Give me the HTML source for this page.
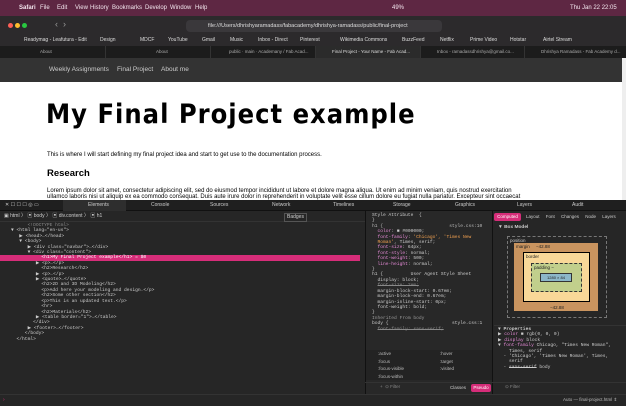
<!DOCTYPE html>
<html><head><style>
*{margin:0;padding:0;box-sizing:border-box}
body{width:626px;height:406px;overflow:hidden;font-family:"Liberation Sans",sans-serif;background:#1e1e1e;position:relative}
.abs{position:absolute}
.menu{left:0;top:0;width:626px;height:16px;background:#5e2743;color:#f3e6ee;font-size:6px;line-height:16px}
.menu span{position:absolute;top:0}
.tool{left:0;top:16px;width:626px;height:30px;background:#2c2a2c}
.url{left:186px;top:20px;width:256px;height:12px;background:#3a383b;border-radius:4px;color:#ddd;font-size:5.5px;line-height:12px;padding-left:22px}
.bm{left:0;top:35px;width:626px;height:11px;color:#ddd;font-size:5px;line-height:11px}
.bm span{position:absolute}
.tabs{left:0;top:46px;width:626px;height:12px;background:#1c1c1c;font-size:4.5px;color:#aaa;line-height:12px}
.tabs div{position:absolute;top:0;height:12px;border-left:1px solid #333;padding-left:40px;width:105px;white-space:nowrap;overflow:hidden}
.nav{left:0;top:58px;width:622px;height:24px;background:#333;color:#ccc;font-size:6.5px;line-height:24px}
.page{left:0;top:82px;width:622px;height:118px;background:#fff;color:#000}
h1{position:absolute;left:46px;top:17px;font-size:27px;font-family:"DejaVu Sans Condensed","Liberation Sans",sans-serif;font-weight:bold;letter-spacing:1px}
.dt{left:0;top:200px;width:626px;height:206px;background:#262626;color:#ccc;font-size:5px}
.dtb{left:0;top:0;width:626px;height:11px;background:#1f1f1f;border-bottom:1px solid #111;line-height:11px}
.dtb span{position:absolute}
.mono{font-family:"Liberation Mono",monospace;font-size:4.6px;line-height:5.4px;white-space:pre}
</style></head><body>
<div class="abs menu">
<span style="left:9px;font-size:8px"></span><span style="left:19px;font-weight:bold">Safari</span><span style="left:40px">File</span><span style="left:57px">Edit</span><span style="left:75px">View</span><span style="left:90px">History</span><span style="left:112px">Bookmarks</span><span style="left:145px">Develop</span><span style="left:170px">Window</span><span style="left:195px">Help</span>
<span style="left:392px">49%</span><span style="left:570px">Thu Jan 22  22:05</span>
</div>
<div class="abs tool">
<div class="abs" style="left:8px;top:7px;width:5px;height:5px;border-radius:50%;background:#fe5f57"></div>
<div class="abs" style="left:15px;top:7px;width:5px;height:5px;border-radius:50%;background:#febc2e"></div>
<div class="abs" style="left:22px;top:7px;width:5px;height:5px;border-radius:50%;background:#28c840"></div>
<div class="abs" style="left:55px;top:3px;color:#999;font-size:9px">‹ &nbsp;›</div>
</div>
<div class="abs url">file:///Users/dhrishyaramadass/fabacademy/dhrishya-ramadass/public/final-project</div>
<div class="abs bm"><span style="left:24px">Readymag - Leafutura - Edit</span><span style="left:100px">Design</span><span style="left:140px">MDCF</span><span style="left:168px">YouTube</span><span style="left:202px">Gmail</span><span style="left:230px">Music</span><span style="left:258px">Inbox - Direct</span><span style="left:300px">Pinterest</span><span style="left:340px">Wikimedia Commons</span><span style="left:402px">BuzzFeed</span><span style="left:440px">Netflix</span><span style="left:470px">Prime Video</span><span style="left:510px">Hotstar</span><span style="left:543px">Airtel Stream</span></div>
<div class="abs tabs">
<div style="left:0;border:none">About</div><div style="left:105px;padding-left:50px">About</div><div style="left:210px;padding-left:18px">public · main · Academany / Fab Acad...</div><div style="left:315px;background:#2b2b2b;color:#ddd;padding-left:16px">Final Project - Your Name - Fab Acad...</div><div style="left:420px;padding-left:16px">Inbox - ramadassdhrishya@gmail.co...</div><div style="left:524px;padding-left:16px">Dhrishya Ramadass - Fab Academy d...</div>
</div>
<div class="abs nav"><span style="position:absolute;left:49px">Weekly Assignments</span><span style="position:absolute;left:117px">Final Project</span><span style="position:absolute;left:161px">About me</span></div>
<div class="abs" style="left:622px;top:58px;width:4px;height:142px;background:#eee"></div>
<div class="abs page">
<h1>My Final Project example</h1>
<div class="abs" style="left:47px;top:70px;font-size:6px">This is where I will start defining my final project idea and start to get use to the documentation process.</div>
<div class="abs" style="left:47px;top:86px;font-size:9.5px;font-weight:bold">Research</div>
<div class="abs" style="left:47px;top:106px;font-size:6px;white-space:nowrap">Lorem ipsum dolor sit amet, consectetur adipiscing elit, sed do eiusmod tempor incididunt ut labore et dolore magna aliqua. Ut enim ad minim veniam, quis nostrud exercitation<br>ullamco laboris nisi ut aliquip ex ea commodo consequat. Duis aute irure dolor in reprehenderit in voluptate velit esse cillum dolore eu fugiat nulla pariatur. Excepteur sint occaecat</div>
</div>
<div class="abs dt">
<div class="abs dtb"><span style="left:5px">✕ ☐ ☐ ☐ ◎ ▭</span><span style="left:63px;width:63px;height:11px;background:#2e2e2e"></span><span style="left:88px">Elements</span><span style="left:151px">Console</span><span style="left:210px">Sources</span><span style="left:272px">Network</span><span style="left:333px">Timelines</span><span style="left:393px">Storage</span><span style="left:455px">Graphics</span><span style="left:517px">Layers</span><span style="left:572px">Audit</span></div>
<div class="abs" style="left:0;top:11px;width:365px;height:11px;line-height:11px;border-bottom:1px solid #333"><span style="position:absolute;left:4px">▣ html 〉 ▣ body 〉 ▣ div.content 〉 ▣ h1</span><span style="position:absolute;left:284px;border:1px solid #555;line-height:7px;top:2px;padding:0 2px">Badges</span></div>
<div class="abs" style="left:0;top:55px;width:360px;height:5.6px;background:#d62d79"></div>
<div class="abs mono" style="left:0;top:23px;width:360px"><span style="color:#888">          &lt;!DOCTYPE html&gt;</span>
    ▼ &lt;html lang="en-us"&gt;
       ▶ &lt;head&gt;…&lt;/head&gt;
       ▼ &lt;body&gt;
          ▶ &lt;div class="navbar"&gt;…&lt;/div&gt;
          ▼ &lt;div class="content"&gt;
<span style="color:#fff">               &lt;h1&gt;My Final Project example&lt;/h1&gt; = $0</span>
             ▶ &lt;p&gt;…&lt;/p&gt;
               &lt;h2&gt;Research&lt;/h2&gt;
             ▶ &lt;p&gt;…&lt;/p&gt;
             ▶ &lt;quote&gt;…&lt;/quote&gt;
               &lt;h2&gt;2D and 3D Modeling&lt;/h2&gt;
               &lt;p&gt;Add here your modeling and design.&lt;/p&gt;
               &lt;h2&gt;Some other section&lt;/h2&gt;
               &lt;p&gt;This is an updated text.&lt;/p&gt;
               &lt;hr&gt;
               &lt;h2&gt;Materials&lt;/h2&gt;
             ▶ &lt;table border="1"&gt;…&lt;/table&gt;
            &lt;/div&gt;
          ▶ &lt;footer&gt;…&lt;/footer&gt;
         &lt;/body&gt;
      &lt;/html&gt;</div>
<div class="abs" style="left:0;top:194px;width:365px;height:1px;background:#333"></div>
<div class="abs" style="left:3px;top:197px;color:#d62d79">›</div>
<div class="abs" style="left:365px;top:11px;width:128px;height:184px;background:#282828;border-left:1px solid #111;border-right:1px solid #111"></div>
<div class="abs mono" style="left:372px;top:13px;color:#ccc">Style Attribute  {
}
<span style="color:#bbb">h1 {                        style.css:10</span>
  <span style="color:#e58ad6">color</span>: ■ #000000;
  <span style="color:#e58ad6">font-family</span>: <span style="color:#f0a050">'Chicago', 'Times New
  Roman'</span>, Times, serif;
  <span style="color:#e58ad6">font-size</span>: 64px;
  <span style="color:#e58ad6">font-style</span>: normal;
  <span style="color:#e58ad6">font-weight</span>: 500;
  <span style="color:#e58ad6">line-height</span>: normal;
}
h1 {          User Agent Style Sheet
  display: block;
  <s style="color:#888">font-size: 2em;</s>
  margin-block-start: 0.67em;
  margin-block-end: 0.67em;
  margin-inline-start: 0px;
  font-weight: bold;
}
<span style="color:#999">Inherited From body</span>
body {                       style.css:1
  <s style="color:#888">font-family: sans-serif;</s></div>
<div class="abs" style="left:366px;top:150px;width:126px;height:30px;background:#232323;font-size:4.5px;line-height:7.5px;color:#bbb;padding-left:12px">:active<br>:focus<br>:focus-visible<br>:focus-within</div>
<div class="abs" style="left:440px;top:150px;font-size:4.5px;line-height:7.5px;color:#bbb">:hover<br>:target<br>:visited</div>
<div class="abs" style="left:471px;top:184px;width:20px;height:8px;background:#d62d79;color:#fff;font-size:4.5px;line-height:8px;text-align:center;border-radius:2px">Pseudo</div>
<div class="abs" style="left:450px;top:184px;font-size:4.5px;line-height:8px">Classes</div>
<div class="abs" style="left:494px;top:13px;width:27px;height:8px;background:#d62d79;color:#fff;font-size:4.5px;line-height:8px;text-align:center;border-radius:2px">Computed</div>
<div class="abs" style="left:526px;top:13px;font-size:4.5px;line-height:8px;word-spacing:5px">Layout Font Changes Node Layers</div>
<div class="abs" style="left:498px;top:25px;font-size:4.8px;font-weight:bold">▼ Box Model</div>
<div class="abs" style="left:507px;top:36px;width:100px;height:82px;border:1px dashed #777;font-size:4.5px;color:#ccc;padding:1px 2px">position</div>
<div class="abs" style="left:514px;top:43px;width:84px;height:68px;background:#c9945f;font-size:4.5px;color:#222;padding:1px 2px">margin &nbsp;&nbsp;&nbsp; −42.88</div>
<div class="abs" style="left:523px;top:52px;width:67px;height:50px;background:#f9d898;border:1px solid #000;font-size:4.5px;color:#222;padding:1px 2px">border</div>
<div class="abs" style="left:531px;top:63px;width:51px;height:29px;background:#c1cf8c;border:1px dashed #333;font-size:4.5px;color:#222;padding:1px 2px">padding −</div>
<div class="abs" style="left:540px;top:73px;width:32px;height:9px;background:#8cb7c9;border:1px solid #333;font-size:4px;color:#222;line-height:7px;text-align:center">1280 × 84</div>
<div class="abs" style="left:550px;top:105px;font-size:4.5px;color:#222">−42.88</div>
<div class="abs" style="left:494px;top:125px;width:132px;height:1px;background:#333"></div>
<div class="abs mono" style="left:498px;top:127px;color:#ccc"><b>▼ Properties</b>
▶ <span style="color:#e58ad6">color</span> ■ rgb(0, 0, 0)
▶ <span style="color:#e58ad6">display</span> block
▼ <span style="color:#e58ad6">font-family</span> Chicago, "Times New Roman",
    Times, serif
  - 'Chicago', 'Times New Roman', Times,
    serif
  - <s>sans-serif</s> body</div>
<div class="abs" style="left:365px;top:182px;width:261px;height:1px;background:#333"></div>
<div class="abs" style="left:380px;top:184px;font-size:4.5px;color:#888">+ &nbsp;⊙ Filter</div>
<div class="abs" style="left:505px;top:184px;font-size:4.5px;color:#888">⊙ Filter</div>
<div class="abs" style="left:365px;top:194px;width:261px;height:1px;background:#333"></div>
<div class="abs" style="left:563px;top:197px;font-size:4.5px;color:#bbb">Auto — final-project.html ⇕</div>
</div>
</body></html>
